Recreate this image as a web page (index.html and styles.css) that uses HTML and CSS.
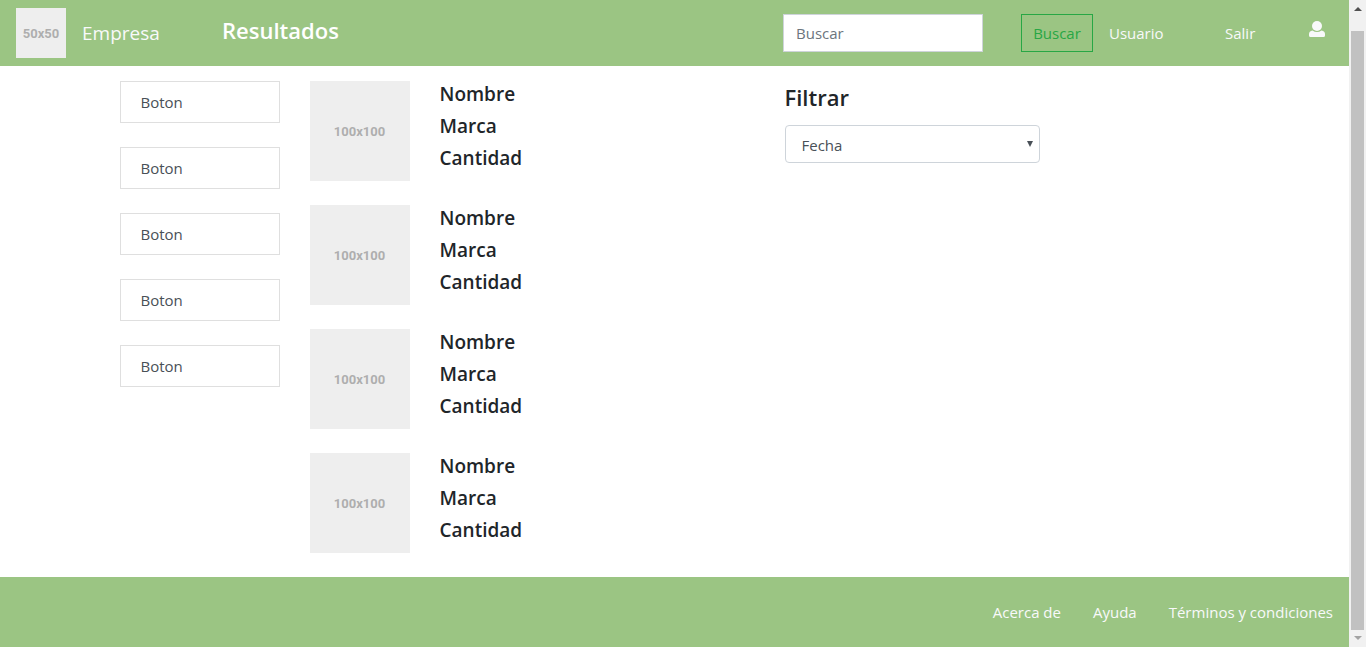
FILE: index.html
```html
<!DOCTYPE html>
<html lang="es">
<head>
<meta charset="utf-8">
<meta name="viewport" content="width=device-width, initial-scale=1">
<title>Resultados</title>
<link rel="stylesheet" href="styles.css">
</head>
<body>
<div class="page">
  <header class="navbar">
    <a class="brand" href="#"><span class="thumb thumb-small">50x50</span>Empresa</a>
    <h1 class="title">Resultados</h1>
    <form class="search">
      <input class="search-input" type="search" placeholder="Buscar" aria-label="Buscar">
      <button class="search-button" type="button">Buscar</button>
    </form>
    <nav class="user-nav">
      <a class="user-link" href="#">Usuario</a>
      <a class="exit-link" href="#">Salir</a>
      <a class="profile" href="#" aria-label="Perfil">
        <svg width="16" height="16" viewBox="0 0 16 16" fill="currentColor"><circle cx="8" cy="5" r="5"/><path d="M3.5 9.5Q8 12.5 12.500 9.500Q16 10 16 13V14.500Q16 16 14.500 16H1.500Q0 16 0 14.500V13Q0 10 3.500 9.500Z"/></svg>
      </a>
    </nav>
  </header>
  <main class="content">
    <div class="buttons">
      <button class="side-button" type="button">Boton</button>
      <button class="side-button" type="button">Boton</button>
      <button class="side-button" type="button">Boton</button>
      <button class="side-button" type="button">Boton</button>
      <button class="side-button" type="button">Boton</button>
    </div>
    <div class="results">
      <article class="item"><span class="thumb">100x100</span><div class="info"><h2>Nombre</h2><h2>Marca</h2><h2>Cantidad</h2></div></article>
      <article class="item"><span class="thumb">100x100</span><div class="info"><h2>Nombre</h2><h2>Marca</h2><h2>Cantidad</h2></div></article>
      <article class="item"><span class="thumb">100x100</span><div class="info"><h2>Nombre</h2><h2>Marca</h2><h2>Cantidad</h2></div></article>
      <article class="item"><span class="thumb">100x100</span><div class="info"><h2>Nombre</h2><h2>Marca</h2><h2>Cantidad</h2></div></article>
    </div>
    <div class="filter">
      <label class="filter-label" for="filter">Filtrar</label>
      <div class="select-box">
        <select class="select" id="filter"><option>Fecha</option></select>
        <svg class="caret" width="6" height="6" viewBox="0 0 6 6" fill="#495057"><path d="M0 0H6L3 6Z"/></svg>
      </div>
    </div>
  </main>
  <footer class="footer">
    <a href="#">Acerca de</a>
    <a href="#">Ayuda</a>
    <a href="#">Términos y condiciones</a>
  </footer>
</div>
<div class="scrollbar" aria-hidden="true">
  <svg class="arrow" width="8" height="4" viewBox="0 0 8 4" fill="#505050"><path d="M4 0L8 4H0Z"/></svg>
  <div class="scroll-thumb"></div>
  <svg class="arrow" width="8" height="4" viewBox="0 0 8 4" fill="#a3a3a3"><path d="M0 0H8L4 4Z"/></svg>
</div>
</body>
</html>
```

FILE: styles.css
```css
* { box-sizing: border-box; }

body {
  display: flex;
  min-height: 100vh;
  margin: 0;
  background: #fff;
  color: #212529;
  font: 15px/24px "Segoe UI", "Open Sans", sans-serif;
}

h1, h2 { margin: 0; }
a { color: #f8f9fa; text-decoration: none; }
input, button, select { font: inherit; }

.page {
  display: flex;
  flex: 1;
  flex-direction: column;
  min-width: 0;
}

.navbar {
  display: flex;
  align-items: center;
  padding: 8px 24px 8px 16px;
  background: #9bc583;
}

.brand {
  display: flex;
  align-items: center;
  gap: 16px;
  width: 206px;
  font-size: 19px;
}

.thumb {
  display: flex;
  flex: none;
  align-items: center;
  justify-content: center;
  width: 100px;
  height: 100px;
  padding-top: 2px;
  background: #eee;
  color: #aeaeae;
  font: bold 13px/16px Roboto, sans-serif;
}

.thumb-small { width: 50px; height: 50px; }

.title {
  padding-bottom: 6px;
  color: #fff;
  font-size: 22px;
  font-weight: 600;
}

.search {
  display: flex;
  gap: 38px;
  margin-left: auto;
}

.search-input {
  width: 200px;
  height: 38px;
  padding: 6px 12px;
  border: 1px solid #ced4da;
  border-radius: 0;
  background: #fff;
}

.search-input::placeholder { color: #6c757d; opacity: 1; }

.search-button {
  width: 72px;
  height: 38px;
  padding: 0;
  border: 1px solid #28a745;
  background: transparent;
  color: #28a745;
}

.user-nav {
  display: flex;
  padding-left: 16px;
}

.user-link { width: 116px; }
.exit-link { width: 84px; }
.profile { height: 16px; line-height: 0; }

.content {
  display: grid;
  grid-template-columns: 2fr 5fr 3fr 2fr;
  width: 100%;
  max-width: 1140px;
  margin: 0 auto;
  padding: 15px 0 24px;
}

.buttons, .results, .filter {
  display: flex;
  flex-direction: column;
  padding: 0 15px;
}

.buttons, .results { gap: 24px; }

.side-button {
  height: 42px;
  padding: 0 20px;
  border: 1px solid #dfdfdf;
  background: #fff;
  color: #495057;
  text-align: left;
}

.item { display: flex; gap: 30px; }

.info {
  display: flex;
  flex-direction: column;
  gap: 8px;
  padding-top: 1px;
}

.info h2 { font-size: 19px; font-weight: 600; }

.filter-label {
  margin-bottom: 12px;
  font-size: 22px;
  font-weight: 600;
  line-height: 32px;
}

.select-box { position: relative; }

.select {
  width: 100%;
  height: 38px;
  padding: 2px 16px 0;
  border: 1px solid #ced4da;
  border-radius: 4px;
  appearance: none;
  background: #fff;
  color: #495057;
}

.caret {
  position: absolute;
  top: 16px;
  right: 7px;
  pointer-events: none;
}

.footer {
  display: flex;
  justify-content: flex-end;
  gap: 32px;
  margin-top: auto;
  padding: 23px 16px;
  background: #9bc583;
}

.scrollbar {
  position: sticky;
  top: 0;
  display: flex;
  flex-direction: column;
  align-items: center;
  width: 17px;
  height: 100vh;
  padding: 7px 2px;
  gap: 6px;
  background: #f1f1f1;
}

.arrow { flex: none; }

.scroll-thumb {
  flex: 1;
  width: 100%;
  margin-top: 14px;
  background: #c1c1c1;
}
```
